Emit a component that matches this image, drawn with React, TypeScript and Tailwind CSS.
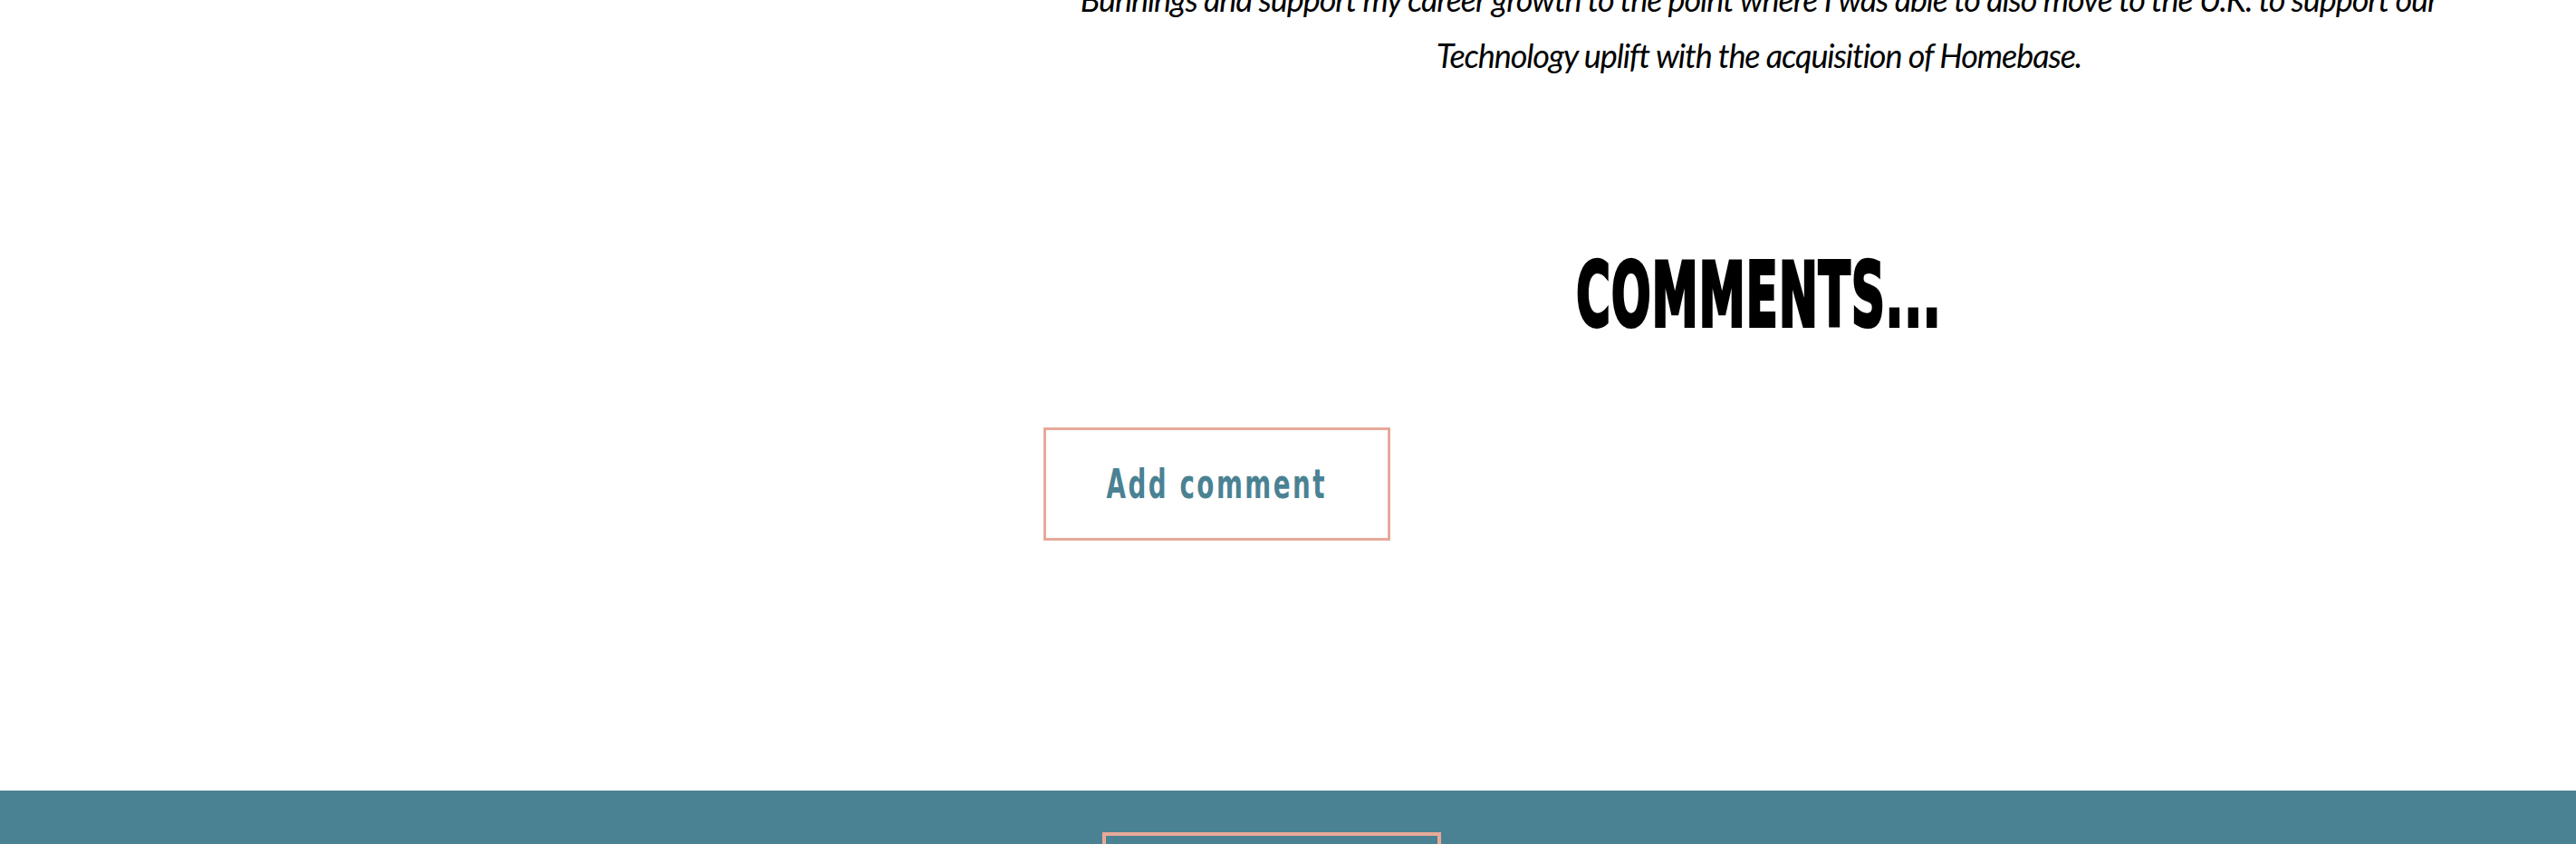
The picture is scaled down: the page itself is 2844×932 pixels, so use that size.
export default function App() {
  return (
    <div className="h-[932px] overflow-hidden bg-white">
      {/* Article body */}
      <div className="flex h-[873px]">
        <div className="w-[1152px] shrink-0" />
        <main className="flex w-[1580px] flex-col">
          <p
            className="-mt-[32px] text-center text-[36px] italic leading-[62px] tracking-[-1.1px] text-black"
            style={{ fontFamily: 'Lato, "Open Sans", sans-serif' }}
          >
            Bunnings and support my career growth to the point where I was able to also move to the U.K. to support our
            <br />
            Technology uplift with the acquisition of Homebase.
          </p>

          <h2
            className="mt-[183px] origin-center scale-x-[0.58] text-center text-[98px] leading-[102px] font-bold tracking-[2px] text-black [-webkit-text-stroke:4px_black]"
            style={{ fontFamily: '"DejaVu Sans", sans-serif', fontStretch: 'condensed' }}
          >
            COMMENTS...
          </h2>

          <div className="mt-[95px]">
            <button className="flex h-[125px] w-[383px] items-center justify-center overflow-visible border-[3px] border-[#e8a998] bg-white">
              <span
                className="inline-block shrink-0 scale-x-[0.63] whitespace-nowrap text-[44px] font-bold tracking-[4px] text-[#4a8293]"
                style={{ fontFamily: '"DejaVu Sans", sans-serif' }}
              >
                Add comment
              </span>
            </button>
          </div>
        </main>
      </div>

      {/* Footer */}
      <footer className="h-[300px] bg-[#4b8293] pt-[46px] pl-[1217px]">
        <div className="h-[120px] w-[374px] border-4 border-[#e8a998]" />
      </footer>
    </div>
  )
}
